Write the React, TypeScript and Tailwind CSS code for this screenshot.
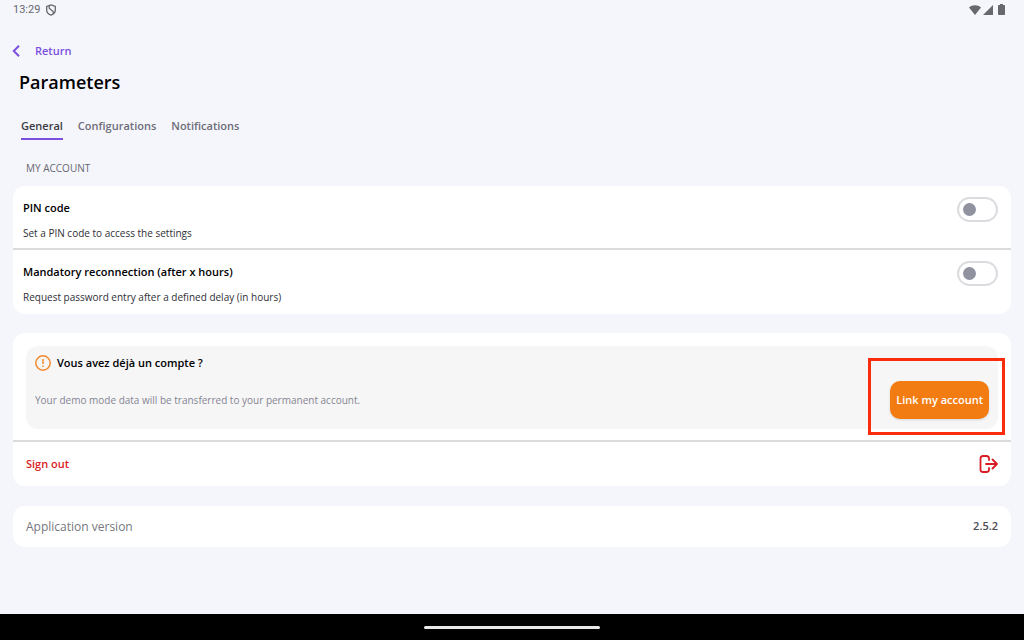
import { useState } from "react";

const tabs = ["General", "Configurations", "Notifications"];

const settings = [
  {
    id: "pin-code",
    title: "PIN code",
    description: "Set a PIN code to access the settings",
  },
  {
    id: "reconnection",
    title: "Mandatory reconnection (after x hours)",
    description: "Request password entry after a defined delay (in hours)",
  },
];

function StatusBar() {
  return (
    <div className="flex h-5 items-center justify-between pr-[19px] pb-px pl-[13px] text-[#66686c]">
      <div className="flex items-center gap-[5px]">
        <span className="font-[Roboto,sans-serif] text-[11px] leading-4">13:29</span>
        <svg className="size-3" viewBox="0 0 12 12" fill="none" stroke="currentColor" strokeWidth="1.3">
          <path d="M6 .9 10.300 2.500V6c0 2.300-1.700 4.200-4.300 5.100C3.400 10.200 1.700 8.300 1.700 6V2.500Z" />
          <path d="M4.200 1.800 4.200 4.200 8.200 7.600V9.800" />
        </svg>
      </div>
      <div className="flex items-center gap-[2px]" aria-hidden="true">
        <svg className="h-[10px] w-3" viewBox="0 0 12 10" fill="currentColor">
          <path d="M0 2.500C1.700 1 3.700.2 6 .2s4.300.8 6 2.300L6 10Z" />
        </svg>
        <svg className="mr-[3px] size-[10px]" viewBox="0 0 10 10" fill="currentColor">
          <path d="M10 0v10H0Z" />
        </svg>
        <svg className="h-[11px] w-[7px]" viewBox="0 0 7 11" fill="currentColor">
          <path d="M2 0h3v1h1.200q.8 0 .8.800v8.400q0 .8-.8.800H.800Q0 11 0 10.200V1.800Q0 1 .8 1H2Z" />
        </svg>
      </div>
    </div>
  );
}

function SettingRow({ id, title, description }: { id: string; title: string; description: string }) {
  const [enabled, setEnabled] = useState(false);

  return (
    <div className="flex items-start justify-between border-b-2 border-[#dbdbdd] pt-[11px] pr-[13px] pb-[7px] pl-[10px] last:border-transparent">
      <div>
        <label htmlFor={id} className="block text-[11px] leading-[22px] font-semibold text-black">
          {title}
        </label>
        <p id={`${id}-description`} className="mt-[6px] text-[10px] leading-4 text-[#2f2f35]">
          {description}
        </p>
      </div>
      <input
        id={id}
        type="checkbox"
        role="switch"
        aria-describedby={`${id}-description`}
        checked={enabled}
        onChange={(event) => setEnabled(event.target.checked)}
        className="flex h-[25px] w-[41px] cursor-pointer appearance-none items-center rounded-full border-2 border-[#dcdce0] bg-white pl-1 before:size-[13px] before:rounded-full before:bg-[#9192a0] checked:border-[#7b4fe0] checked:pl-5 checked:before:bg-[#7b4fe0]"
      />
    </div>
  );
}

export default function App() {
  const [activeTab, setActiveTab] = useState("General");

  return (
    <div className="flex min-h-screen flex-col bg-[#f5f6fc] font-['Open_Sans',sans-serif]">
      <StatusBar />

      <main className="flex-1 px-[13px] pb-4">
        <button type="button" className="mt-[21px] flex items-center gap-[15px] text-[11px] leading-5 font-semibold text-[#7b4fe0]">
          <svg className="-ml-[3px] h-3 w-[10px]" viewBox="0 0 10 12" fill="none" stroke="currentColor" strokeWidth="2">
            <path d="M9 .8 3.800 6 9 11.200" />
          </svg>
          Return
        </button>

        <h1 className="mt-[7px] pl-[6px] text-lg leading-7 font-semibold text-black">Parameters</h1>

        <div role="tablist" className="mt-[22px] flex gap-[15px] pl-2">
          {tabs.map((tab) => (
            <button
              key={tab}
              type="button"
              role="tab"
              aria-selected={tab === activeTab}
              onClick={() => setActiveTab(tab)}
              className={
                tab === activeTab
                  ? "border-b-2 border-[#7b4fe0] pb-1 text-[11px] leading-4 font-semibold text-[#3a3a42]"
                  : "border-b-2 border-transparent pb-1 text-[11px] leading-4 font-semibold text-[#6d6d78]"
              }
            >
              {tab}
            </button>
          ))}
        </div>

        <h2 className="mt-5 pl-[13px] text-[10px] leading-4 text-[#66666f]">MY ACCOUNT</h2>

        <section className="mt-[10px] rounded-xl bg-white">
          {settings.map((setting) => (
            <SettingRow key={setting.id} {...setting} />
          ))}
        </section>

        <section className="mt-[19px] rounded-xl bg-white">
          <div className="border-b-2 border-[#dbdbdd] px-[13px] pt-[13px] pb-[11px]">
            <div className="flex justify-between rounded-xl bg-[#f6f6f7] pr-[9px] pb-[10px] pl-[9px]">
              <div className="pt-[7px] pb-[11px]">
                <h3 className="flex items-center gap-[6px] text-[11px] leading-5 font-semibold text-black">
                  <svg className="size-4" viewBox="0 0 16 16" fill="none" stroke="#f28a2e" strokeWidth="1.5">
                    <circle cx="8" cy="8" r="7.200" />
                    <path d="M8 4v5M8 10.500v1.500" />
                  </svg>
                  Vous avez déjà un compte ?
                </h3>
                <p className="mt-[19px] text-[10px] leading-4 text-[#858592]">
                  Your demo mode data will be transferred to your permanent account.
                </p>
              </div>
              <div className="relative self-end">
                <button
                  type="button"
                  className="h-[38px] rounded-[10px] bg-[#f27c12] px-[6px] text-[11px] font-semibold text-white shadow-sm"
                >
                  Link my account
                </button>
                <span className="pointer-events-none absolute -top-[23px] -right-4 -bottom-4 -left-[22px] border-[3px] border-[#fb2c0c]" />
              </div>
            </div>
          </div>
          <button
            type="button"
            className="flex h-11 w-full items-center justify-between px-[13px] text-[11px] font-semibold text-[#d91c24]"
          >
            Sign out
            <svg
              className="h-[18px] w-[19px]"
              viewBox="0 0 19 18"
              fill="none"
              stroke="currentColor"
              strokeWidth="1.800"
              strokeLinecap="round"
              strokeLinejoin="round"
            >
              <path d="M10 5V3.500Q10 1 7.500 1H4Q1.500 1 1.500 3.500v11Q1.500 17 4 17H7.500q2.500 0 2.500-2.500V13M7 9H18M13.500 4.500 18 9l-4.500 4.500" />
            </svg>
          </button>
        </section>

        <dl className="mt-5 flex h-[41px] items-center justify-between rounded-xl bg-white px-[13px]">
          <dt className="text-xs text-[#777781]">Application version</dt>
          <dd className="text-[11px] font-semibold text-[#4c4c55]">2.5.2</dd>
        </dl>
      </main>

      <footer className="flex h-[26px] items-center justify-center bg-black">
        <span className="h-[3px] w-44 rounded-full bg-[#e8e8e8]" />
      </footer>
    </div>
  );
}
